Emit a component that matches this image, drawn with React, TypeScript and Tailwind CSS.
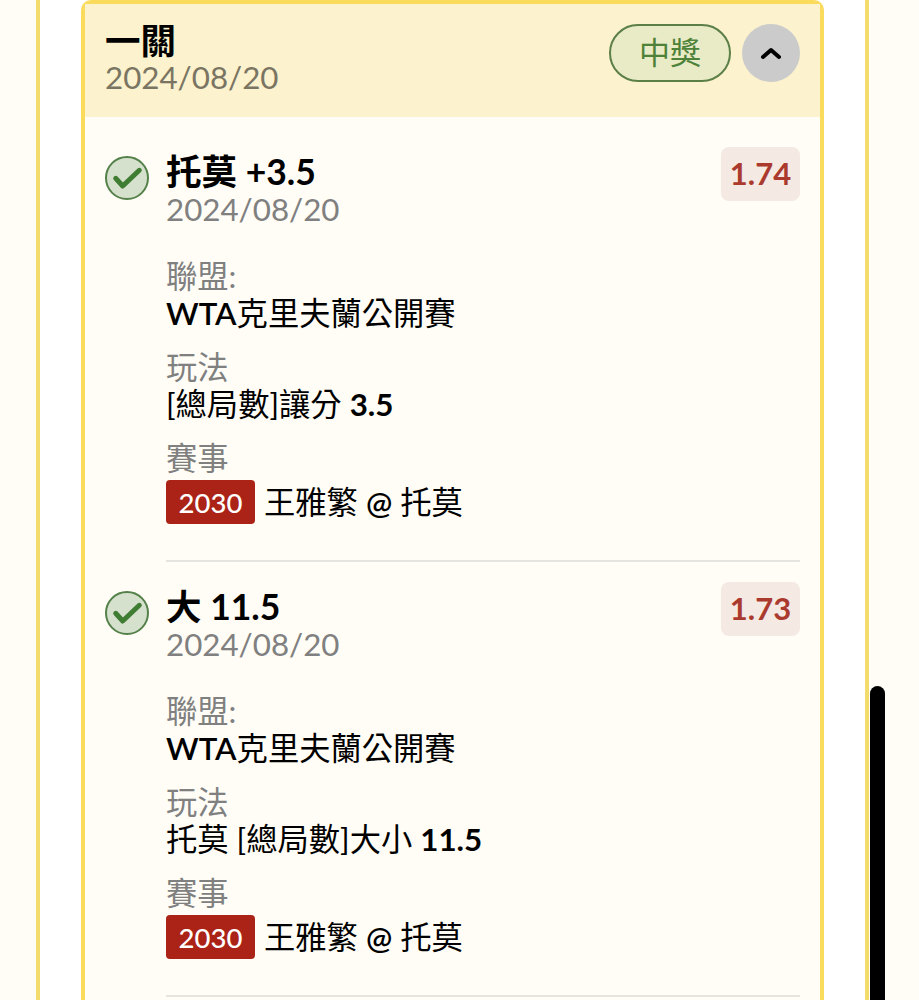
const FONT = "font-['Lato','Noto_Sans_CJK_TC',sans-serif]";

interface Leg {
  title: string;
  titleNum: string;
  odds: string;
  play: string;
  playNum: string;
}

const LEGS: Leg[] = [
  { title: "托莫", titleNum: "+3.5", odds: "1.74", play: "[總局數]讓分 ", playNum: "3.5" },
  { title: "大", titleNum: "11.5", odds: "1.73", play: "托莫 [總局數]大小 ", playNum: "11.5" },
];

function WinCheck() {
  return (
    <div className="mt-[9px] mr-[18px] h-[44px] w-[44px] shrink-0 rounded-full border-2 border-[#54804a] bg-[#d6e1cd]">
      <svg viewBox="0 0 40 40" className="h-[40px] w-[40px]" fill="none">
        <path
          d="M8.7 20.3 L15.7 28 L32.3 12.3"
          stroke="#3f7d32"
          strokeWidth="5"
          strokeLinecap="round"
          strokeLinejoin="round"
        />
      </svg>
    </div>
  );
}

function LegRow({ leg }: { leg: Leg }) {
  return (
    <div className="flex">
      <WinCheck />
      <div className="ml-[-1px] min-w-0 flex-1 border-b-2 border-[#e6e4de] pb-[34px]">
        <div className="flex items-start justify-between">
          <div>
            <div className="h-[44px] text-[35.5px] leading-[50px] font-bold text-black">
              {leg.title} {leg.titleNum}
            </div>
            <div className="text-[31.3px] leading-[36px] text-[#808080]">2024/08/20</div>
          </div>
          <div className="flex h-[54px] w-[79px] items-center justify-center rounded-[8px] bg-[#f4e9e3] pb-[2px] text-[31px] font-bold text-[#ab3a2e]">
            {leg.odds}
          </div>
        </div>
        <div className="mt-[31px] text-[31.3px] leading-[37px] text-[#808080]">聯盟:</div>
        <div className="text-[31.3px] leading-[37px] text-black">
          <span className="font-semibold">WTA</span>克里夫蘭公開賽
        </div>
        <div className="mt-[17px] text-[31.3px] leading-[37px] text-[#808080]">玩法</div>
        <div className="text-[31.3px] leading-[37px] text-black">
          {leg.play}
          <span className="font-bold">{leg.playNum}</span>
        </div>
        <div className="mt-[17px] text-[31.3px] leading-[37px] text-[#808080]">賽事</div>
        <div className="mt-[2px] flex items-center">
          <span className="flex h-[44px] w-[89px] items-center justify-center rounded-[4px] bg-[#ab2317] text-[27.5px] font-medium text-white">
            2030
          </span>
          <span className="ml-[9px] text-[31.3px] text-black">
            王雅繁 <span className="font-semibold">@</span> 托莫
          </span>
        </div>
      </div>
    </div>
  );
}

export default function App() {
  return (
    <div className={`relative h-[1000px] overflow-hidden bg-[#fffdf6] ${FONT}`}>
      <div className="mx-[36px] h-full w-[833px] border-x-4 border-[#f4dc6c] bg-white px-[41px]">
        <div className="h-full rounded-t-[10px] border-x-4 border-t-4 border-[#fbdb5c] bg-[#fffdf6]">
          <div className="flex h-[113px] items-start justify-between bg-[#fcf2cd] px-[20px]">
            <div>
              <div className="mt-[15px] text-[35.5px] leading-[44px] font-bold text-black">一關</div>
              <div className="mt-[-4px] text-[31.3px] leading-[36px] text-[#7a7563]">2024/08/20</div>
            </div>
            <div className="mt-[20px] flex items-center">
              <span className="flex h-[58px] w-[122px] items-center justify-center rounded-full border-2 border-[#5b7f47] bg-[#e9ebc6] pb-[2px] text-[31px] text-[#4f8239]">
                中獎
              </span>
              <span className="ml-[11px] flex h-[58px] w-[58px] items-center justify-center rounded-full bg-[#cbcbcb]">
                <svg viewBox="0 0 30 18" className="h-[18px] w-[30px]" fill="none">
                  <path
                    d="M7 13 L15 6 L23 13"
                    stroke="#000"
                    strokeWidth="4"
                    strokeLinecap="round"
                    strokeLinejoin="round"
                  />
                </svg>
              </span>
            </div>
          </div>
          <div className="flex flex-col gap-[20px] px-[20px] pt-[30px]">
            {LEGS.map((leg) => (
              <LegRow key={leg.odds} leg={leg} />
            ))}
          </div>
        </div>
      </div>
      <div className="absolute top-[686px] left-[870px] h-[400px] w-[15px] rounded-full bg-black" />
    </div>
  );
}
